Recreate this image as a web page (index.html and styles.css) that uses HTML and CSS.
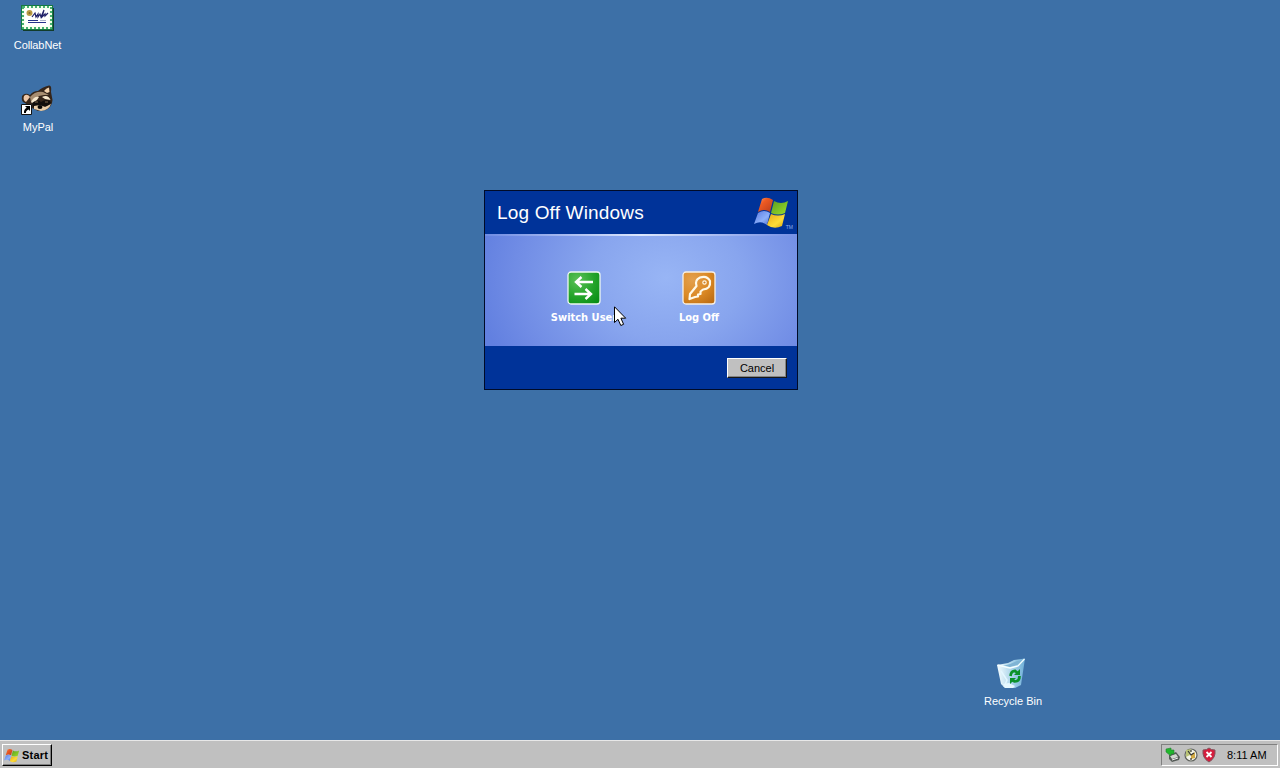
FILE: index.html
```html
<!DOCTYPE html>
<html lang="en">
<head>
<meta charset="utf-8">
<title>Desktop</title>
<link rel="stylesheet" href="styles.css">
</head>
<body>
<svg width="0" height="0" class="defs" aria-hidden="true">
  <defs>
    <linearGradient id="flagRed" x1="0" y1="0" x2="1" y2="1"><stop offset="0" stop-color="#f7a070"/><stop offset=".35" stop-color="#ee5a22"/><stop offset="1" stop-color="#b83c1c"/></linearGradient>
    <linearGradient id="flagGreen" x1="0" y1="0" x2="1" y2="1"><stop offset="0" stop-color="#5c9c20"/><stop offset="1" stop-color="#9be02c"/></linearGradient>
    <linearGradient id="flagBlue" x1="0" y1="0" x2="1" y2="1"><stop offset="0" stop-color="#5878e0"/><stop offset=".6" stop-color="#8cb0fa"/><stop offset="1" stop-color="#5070d0"/></linearGradient>
    <linearGradient id="flagYellow" x1="0" y1="0" x2="1" y2="1"><stop offset="0" stop-color="#e8a818"/><stop offset=".6" stop-color="#fcdc38"/><stop offset="1" stop-color="#d8a010"/></linearGradient>
    <linearGradient id="bin" x1="0" y1="0" x2="1" y2="0"><stop offset="0" stop-color="#f4fcff"/><stop offset=".45" stop-color="#b5daed"/><stop offset="1" stop-color="#6eafd8"/></linearGradient>
    <symbol id="flag" viewBox="0 0 36 31">
      <path d="M8 2Q13-1 19 3L16 15Q10 11 4 15Z" fill="url(#flagRed)"/>
      <path d="M20 4Q27 8 34 4L31 16Q24 19 17 16Z" fill="url(#flagGreen)"/>
      <path d="M4 16Q10 12 16 16L13 28Q7 23 0 27Z" fill="url(#flagBlue)"/>
      <path d="M17 17Q24 20 31 17L28 29Q20 33 13 28Z" fill="url(#flagYellow)"/>
    </symbol>
  </defs>
</svg>

<div class="screen">
  <main class="desktop">
    <div class="shortcut collabnet">
      <svg class="pic" width="34" height="28" viewBox="0 0 34 28">
        <path d="M2 3H33V26H2Z" fill="#123c2b"/>
        <rect x="0.5" y="0.5" width="31" height="24" fill="#f5ffe9" stroke="#167942"/>
        <rect x="2" y="2" width="28" height="21" fill="none" stroke="#45b070" stroke-width="2" stroke-dasharray="2 2"/>
        <rect x="3.500" y="3.500" width="25" height="18" fill="#fff"/>
        <circle cx="8.500" cy="8" r="3" fill="#b99a43"/><circle cx="8.500" cy="8" r="1" fill="#7c672a"/>
        <path d="M11 12L14 8L15 12L17 9V12L19 9L20 12L23 5L21 12L24 9V11L27 8" fill="none" stroke="#202068" stroke-width="1.200"/>
        <path d="M7 15.500H17M7 17.500H25" stroke="#26328a"/>
        <path d="M19 15.500H25" stroke="#aab2cc"/>
      </svg>
      <span class="label">CollabNet</span>
    </div>

    <div class="shortcut mypal">
      <svg class="pic" width="34" height="32" viewBox="0 0 34 32">
        <path d="M17 6Q21 2 28 0.500Q31 0 30 7L31.500 15Q31 22 25 25L17 26L9 22L4 18Q0 17 1 11Q4 7 9 10Q12 6 17 6Z" fill="#35251a"/>
        <path d="M23 6Q25 3 28 2.500L28.500 7L26 8Z" fill="#f2d2ad"/>
        <path d="M3 11Q1.500 15 5 17L9 12Q6 8 3 11Z" fill="#eec7a7"/>
        <path d="M9 12Q14 6 22 7L28 10L23 10L18 11L14 15L10 17Z" fill="#a78d70"/>
        <path d="M10 17Q13 11 18 12L16 15L12 19ZM21 12Q27 9 29.500 15L24 14Z" fill="#f7e8cd"/>
        <path d="M11 18Q17 13 20 17Q26 13 30 17Q28 22 23 21L18 24L12 22Z" fill="#120e0b"/>
        <path d="M13 21L19 20L24 22L30 19Q28 25 20 26L13 24Z" fill="#e9cda8"/>
        <ellipse cx="19" cy="22" rx="2.500" ry="2" fill="#090807"/>
        <path d="M14 17H17M24 17H27" stroke="#80684e"/>
        <path d="M0.500 19.500H10.500V29.500H0.500Z" fill="#fff" stroke="#111"/>
        <path d="M4 21H9V26L7.500 24.500Q4.500 26 5 28H3Q2.500 24.500 5.700 22.700Z" fill="#000"/>
      </svg>
      <span class="label">MyPal</span>
    </div>

    <div class="shortcut recycle">
      <svg class="pic" width="32" height="32" viewBox="0 0 32 32">
        <path d="M1 7L12 5L18 2L29 0.500L25 27L19 30L9 30L5 26Z" fill="url(#bin)"/>
        <path d="M7 8L14 6L21 3L27 2.500L21 7L14 9Z" fill="#7fb4d4"/>
        <path d="M1.500 7L14 10L22 8L28.500 1" fill="none" stroke="#f5ffff" stroke-width="1.300"/>
        <path d="M5 13L11 22L8 29" fill="none" stroke="#e3f7ff" stroke-width="1.500"/>
        <path d="M7 26L13 25L19 28L17 30H9Z" fill="#e6f8ff"/>
        <g fill="none" stroke="#0b922a" stroke-width="2.700"><path d="M14.500 18Q15 12.800 19 12.800L21.500 15"/><path d="M23.500 18Q23.500 23.500 18.500 23.500L16 22"/></g>
        <path d="M24 11V17H18ZM14 20H20L14 26Z" fill="#0b922a"/>
      </svg>
      <span class="label">Recycle Bin</span>
    </div>

    <section class="dialog">
      <header class="dialog-head">
        <h1 class="title">Log Off Windows</h1>
        <div class="brand"><svg width="36" height="31"><use href="#flag"/></svg><span class="tm">TM</span></div>
      </header>
      <div class="rule"></div>
      <div class="dialog-body">
        <div class="choice">
          <svg width="34" height="34" viewBox="0 0 34 34">
            <defs><radialGradient id="greenFace" cx=".3" cy=".25" r=".95"><stop offset="0" stop-color="#5cc158"/><stop offset=".55" stop-color="#24a42a"/><stop offset="1" stop-color="#078d13"/></radialGradient></defs>
            <rect x="1" y="1" width="32" height="32" rx="3" fill="url(#greenFace)" stroke="#edf7f1" stroke-width="1.300"/>
            <path d="M9 11H26M14.500 6L9 11L14.500 16M7.500 23H24M18.500 18L24 23L18.500 28" fill="none" stroke="#fff" stroke-width="2.400"/>
          </svg>
          <span class="choice-label">Switch User</span>
        </div>
        <div class="choice">
          <svg width="34" height="34" viewBox="0 0 34 34">
            <defs><radialGradient id="orangeFace" cx=".3" cy=".25" r=".95"><stop offset="0" stop-color="#e3a04e"/><stop offset=".55" stop-color="#db8924"/><stop offset="1" stop-color="#b96a12"/></radialGradient></defs>
            <rect x="1" y="1" width="32" height="32" rx="3" fill="url(#orangeFace)" stroke="#f8f0e4" stroke-width="1.300"/>
            <path d="M14.500 15Q12.500 9 18 6.500Q25 4 28 10Q29 18 21 18.500L18.500 20.500V23L16 23.500V25.500L13 26L7.500 28L8 23Z" fill="none" stroke="#fff9e8" stroke-width="2.200" stroke-linejoin="round"/>
            <circle cx="22.500" cy="11.500" r="1.700" fill="#cf7e1f" stroke="#fff9e8" stroke-width="1.200"/>
          </svg>
          <span class="choice-label">Log Off</span>
        </div>
      </div>
      <footer class="dialog-foot"><button class="cancel">Cancel</button></footer>
    </section>
  </main>

  <footer class="taskbar">
    <button class="start"><svg width="16" height="15"><use href="#flag"/></svg><span>Start</span></button>
    <div class="tray">
      <svg width="16" height="16" viewBox="0 0 16 16">
        <path d="M4 8L11 5L15 10L14 13L7 15L4 12Z" fill="#555b57"/>
        <path d="M5 9L11 7L13 10L7 12Z" fill="#d2d7d0"/><path d="M7 13L13 11" stroke="#eee"/>
        <path d="M1 2L6 1V3H9V7H6V9L1 5Z" fill="#20b72b" stroke="#278134" stroke-width=".6"/>
      </svg>
      <svg width="16" height="16" viewBox="0 0 16 16">
        <circle cx="8" cy="8" r="6" fill="#f3f4e8" stroke="#60635e" stroke-width="1.200"/>
        <path d="M3 3L8 2L7 8L3 10Z" fill="#bac477"/><path d="M8 8L12 5V11L8 12Z" fill="#d2aa45"/>
        <path d="M5 4L8 8L11 6M8 3V5M8 11V13" fill="none" stroke="#333" stroke-width="1.200"/>
      </svg>
      <svg width="16" height="16" viewBox="0 0 16 16">
        <path d="M2 3Q6 3 8 1Q10 3 14 3Q15 11 8 15Q1 11 2 3Z" fill="#d51d3d" stroke="#83545d"/>
        <path d="M5.500 5L10.500 10M10.500 5L5.500 10" stroke="#fff" stroke-width="1.800"/>
      </svg>
      <time class="clock">8:11 AM</time>
    </div>
  </footer>
  <svg class="pointer" width="13" height="21" viewBox="0 0 13 21"><path d="M.5.800V16.500L4 13.300L6.800 19.500L9.600 18.300L6.900 12.200H11.700Z" fill="#fff" stroke="#000"/></svg>
</div>
</body>
</html>
```
FILE: styles.css
```css
* { box-sizing: border-box; }
body { margin: 0; }
.defs { position: absolute; }
.screen {
  position: relative;
  display: flex;
  flex-direction: column;
  width: 1280px;
  height: 768px;
  overflow: hidden;
  background: #3d70a7;
  font: 11px "Liberation Sans", Arial, sans-serif;
}
.screen svg { display: block; flex: none; }
.desktop {
  position: relative;
  flex: 1;
  display: flex;
  justify-content: center;
  align-items: flex-start;
  padding: 190px 0 0 2px;
}
.shortcut {
  position: absolute;
  display: flex;
  flex-direction: column;
  align-items: center;
  width: 76px;
  color: #fff;
}
.pic { margin-bottom: 4px; }
.label { line-height: 13px; white-space: nowrap; }
.collabnet { left: 0; top: 5px; }
.collabnet .pic { margin: 0 1px 6px 0; }
.collabnet .label { letter-spacing: -0.1px; margin-right: 1px; }
.mypal { left: 0; top: 85px; }
.recycle { left: 975px; top: 658px; }
.recycle .pic { margin: 0 3px 5px 0; }

.dialog {
  display: flex;
  flex-direction: column;
  width: 314px;
  height: 200px;
  border: 1px solid #000b28;
  background: #003399;
}
.dialog-head {
  display: flex;
  justify-content: space-between;
  height: 43px;
  padding: 6px 4px 0 12px;
}
.title {
  margin: 4px 0 0;
  color: #fff;
  font-size: 19px;
  font-weight: 400;
  line-height: 24px;
  letter-spacing: 0.17px;
  white-space: nowrap;
}
.brand { display: flex; align-items: flex-end; height: 32px; }
.brand svg { margin-bottom: 1px; }
.tm { color: #91b1ed; font-size: 5px; line-height: 4px; margin-left: -4px; }
.rule {
  height: 2px;
  background: linear-gradient(90deg, #6f8ce4, #dce7fd 50%, #7590e6);
}
.dialog-body {
  display: grid;
  grid-template-columns: 115px 115px;
  justify-content: center;
  height: 110px;
  padding: 35px 0 0 1px;
  background: radial-gradient(ellipse 190px 155px at 58% 38%, #98b5f5 0, #88a5ee 40%, #708ce5 80%, #6280e0 100%);
}
.choice { display: flex; flex-direction: column; align-items: center; gap: 5px; }
.choice-label {
  color: #fff;
  font: bold 11px/15px "DejaVu Sans Condensed", "DejaVu Sans", sans-serif;
  white-space: nowrap;
}
.dialog-foot { display: flex; justify-content: flex-end; flex: 1; padding: 12px 10px 0 0; }
.cancel {
  width: 60px;
  height: 20px;
  padding: 0;
  border: 1px solid;
  border-color: #fff #181818 #181818 #fff;
  box-shadow: inset -1px -1px #858585;
  background: #c0c0c0;
  color: #000;
  font: inherit;
}
.taskbar {
  display: flex;
  justify-content: space-between;
  align-items: flex-start;
  height: 28px;
  padding: 3px 2px 0;
  background: #c0c0c0;
  border-top: 1px solid #e8e8e8;
}
.start {
  display: flex;
  align-items: center;
  gap: 1px;
  width: 50px;
  height: 22px;
  padding: 0 0 0 1px;
  border: 1px solid;
  border-color: #fff #000 #000 #fff;
  box-shadow: inset -1px -1px #808080;
  background: #c0c0c0;
  color: #000;
  font: bold 11px "Liberation Sans", Arial, sans-serif;
  letter-spacing: 0.2px;
}
.start span { margin-left: 1px; }
.tray {
  display: flex;
  align-items: center;
  gap: 2px;
  width: 117px;
  height: 22px;
  padding-left: 3px;
  border: 1px solid;
  border-color: #808080 #fff #fff #808080;
}
.clock { margin-left: 8px; white-space: nowrap; }
.pointer { position: absolute; left: 614px; top: 306px; }
```
